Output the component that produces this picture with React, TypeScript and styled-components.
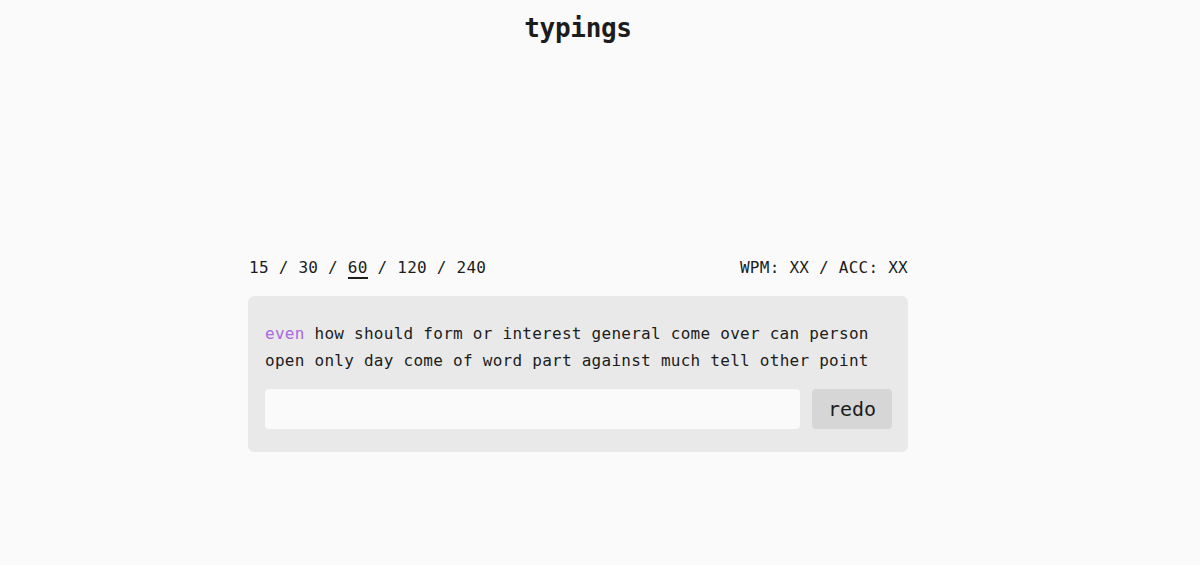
import styled, { createGlobalStyle } from 'styled-components'

const GlobalStyle = createGlobalStyle`
  html, body {
    margin: 0;
    padding: 0;
    background: #fafafa;
    color: #1c1c1c;
    font-family: "DejaVu Sans Mono", "Liberation Mono", monospace;
  }
`

const modes = ['15', '30', '60', '120', '240']
const words = [
  'even how should form or interest general come over can person',
  'open only day come of word part against much tell other point',
]

// layout

const Page = styled.div`
  display: flex;
  flex-direction: column;
  align-items: center;
  min-height: 565px;
  padding-right: 44px;
`

const Title = styled.h1`
  margin: 13px 0 0;
  font-size: 26px;
  line-height: 30px;
  font-weight: 600;
  letter-spacing: -0.3px;
`

const Main = styled.main`
  width: 660px;
  margin-top: 214px;
  display: flex;
  flex-direction: column;
`

const Header = styled.div`
  display: flex;
  justify-content: space-between;
  align-items: center;
  padding: 0 0 0 1px;
  font-size: 16px;
  line-height: 22px;
  letter-spacing: 0.25px;
`

const Modes = styled.div`
  display: flex;
  white-space: pre;
`

const Mode = styled.span<{ $active?: boolean }>`
  position: relative;
  ${({ $active }) => $active && `
    &:after{
      content: '';
      position: absolute;
      left: 0;
      right: 0;
      bottom: -2px;
      height: 2px;
      background: #1c1c1c;
    }
  `}
`

const Stats = styled.div`
  white-space: pre;
`

// panel

const Panel = styled.section`
  margin-top: 17px;
  background: #e9e9e9;
  border-radius: 6px;
  padding: 24px 16px 23px 17px;
`

const Text = styled.div`
  font-size: 16px;
  line-height: 27px;
  letter-spacing: 0.26px;
`

const Word = styled.span<{ $current?: boolean }>`
  color: ${({ $current }) => $current ? '#a76ae0' : 'inherit'};
`

const Controls = styled.div`
  display: flex;
  gap: 12px;
  margin-top: 15px;
`

const Input = styled.input`
  flex: 1;
  height: 40px;
  border: none;
  border-radius: 4px;
  background: #fafafa;
  outline: none;
  padding: 0 10px;
  font: inherit;
`

const Button = styled.button`
  width: 80px;
  height: 40px;
  border: none;
  border-radius: 4px;
  background: #d6d6d6;
  color: #1c1c1c;
  font-family: inherit;
  font-size: 20px;
  cursor: pointer;
`

export default function App() {
  const all = words.join(' ').split(' ')
  const firstLine = words[0].split(' ').length
  return (
    <Page>
      <GlobalStyle />
      <Title>typings</Title>
      <Main>
        <Header>
          <Modes>
            {modes.map((m, i) =>
              <span key={m}>
                <Mode $active={m === '60'}>{m}</Mode>
                {i < modes.length - 1 && ' / '}
              </span>
            )}
          </Modes>
          <Stats>WPM: XX / ACC: XX</Stats>
        </Header>
        <Panel>
          <Text>
            {all.map((w, i) =>
              <span key={i}>
                <Word $current={i === 0}>{w}</Word>
                {i === firstLine - 1 ? <br /> : i < all.length - 1 && ' '}
              </span>
            )}
          </Text>
          <Controls>
            <Input />
            <Button>redo</Button>
          </Controls>
        </Panel>
      </Main>
    </Page>
  )
}
